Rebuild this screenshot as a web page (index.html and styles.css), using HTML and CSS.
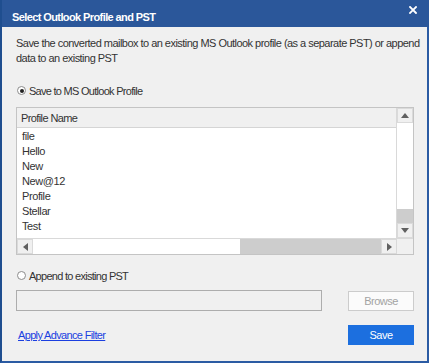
FILE: index.html
```html
<!DOCTYPE html>
<html>
<head>
<meta charset="utf-8">
<link rel="stylesheet" href="styles.css">
</head>
<body>
<div class="window">
  <div class="titlebar">
    <span class="title">Select Outlook Profile and PST</span>
    <span class="close">
      <svg width="8" height="8" viewBox="0 0 8 8"><path d="M1 1L7 7M7 1L1 7" stroke="#fff" stroke-width="1.8" stroke-linecap="square"/></svg>
    </span>
  </div>
  <div class="content">
    <p class="desc">Save the converted mailbox to an existing MS Outlook profile (as a separate PST) or append<br>data to an existing PST</p>
    <label class="radio-row first"><span class="radio checked"></span><span class="label">Save to MS Outlook Profile</span></label>
    <div class="listbox">
      <div class="list-main">
        <div class="list-header">Profile Name</div>
        <div class="rows">
          <div class="row">file</div>
          <div class="row">Hello</div>
          <div class="row">New</div>
          <div class="row">New@12</div>
          <div class="row">Profile</div>
          <div class="row">Stellar</div>
          <div class="row">Test</div>
        </div>
      </div>
      <div class="vscroll">
        <div class="sbtn"><svg width="8" height="5" viewBox="0 0 8 5"><path d="M0 5L4 0L8 5Z" fill="#606060"/></svg></div>
        <div class="vtrack"></div>
        <div class="vthumb"></div>
        <div class="sbtn"><svg width="8" height="5" viewBox="0 0 8 5"><path d="M0 0L8 0L4 5Z" fill="#606060"/></svg></div>
      </div>
      <div class="hscroll">
        <div class="sbtn h"><svg width="5" height="8" viewBox="0 0 5 8"><path d="M5 0L5 8L0 4Z" fill="#606060"/></svg></div>
        <div class="htrack"></div>
        <div class="hthumb"></div>
        <div class="sbtn h"><svg width="5" height="8" viewBox="0 0 5 8"><path d="M0 0L5 4L0 8Z" fill="#606060"/></svg></div>
      </div>
      <div class="corner"></div>
    </div>
    <label class="radio-row second"><span class="radio"></span><span class="label">Append to existing PST</span></label>
    <div class="pst-row">
      <div class="field"></div>
      <button class="btn browse">Browse</button>
    </div>
    <div class="bottom-row">
      <a class="link" href="#">Apply Advance Filter</a>
      <button class="btn save">Save</button>
    </div>
  </div>
</div>
</body>
</html>
```
FILE: styles.css
```css
html, body {
  margin: 0;
  padding: 0;
  background: #ffffff;
}
body {
  font-family: "Liberation Sans", Arial, sans-serif;
  font-size: 11px;
  color: #222;
}
.window {
  width: 425px;
  height: 361px;
  border-left: 2px solid #1f4e8f;
  border-right: 2px solid #2b5ba3;
  border-bottom: 2px solid #2b5ba3;
  display: flex;
  flex-direction: column;
  background: #f0f0f0;
}
.titlebar {
  height: 27px;
  background: #2b579a;
  display: flex;
  align-items: center;
  justify-content: space-between;
  padding: 0 12px 0 10px;
  margin-right: -2px;
}
.title {
  color: #fff;
  font-weight: bold;
  font-size: 11px;
  letter-spacing: -0.6px;
  margin-top: 6px;
}
.close {
  display: flex;
  margin-top: -7px;
}
.content {
  flex: 1;
  padding: 9px 12px 0 14px;
  display: flex;
  flex-direction: column;
}
.desc {
  margin: 0;
  line-height: 15px;
  letter-spacing: -0.53px;
  white-space: nowrap;
  color: #333;
}
.radio-row {
  display: flex;
  align-items: center;
  height: 15px;
  gap: 3px;
  padding-left: 1px;
}
.radio-row.first { margin-top: 17px; }
.radio-row.second { margin-top: 13px; }
.label {
  letter-spacing: -0.72px;
  color: #333;
}
.radio {
  width: 9px;
  height: 9px;
  border: 1px solid #8c8c8c;
  border-radius: 50%;
  background: #fff;
  box-sizing: border-box;
  display: flex;
  align-items: center;
  justify-content: center;
}
.radio.checked::after {
  content: "";
  width: 4px;
  height: 4px;
  border-radius: 50%;
  background: #222;
}
.listbox {
  margin-top: 9px;
  width: 398px;
  height: 148px;
  box-sizing: border-box;
  border: 1px solid #c4c4c4;
  background: #fff;
  display: grid;
  grid-template-columns: 1fr 16px;
  grid-template-rows: 1fr 16px;
}
.list-main {
  overflow: hidden;
}
.list-header {
  height: 20px;
  box-sizing: border-box;
  background: #f0f0f0;
  border-bottom: 1px solid #d5d5d5;
  padding-left: 4px;
  line-height: 20px;
  letter-spacing: -0.6px;
  color: #333;
}
.rows {
  padding-top: 1px;
}
.row {
  height: 15px;
  line-height: 15px;
  padding-left: 5px;
  letter-spacing: -0.4px;
  color: #333;
}
.vscroll {
  display: flex;
  flex-direction: column;
  border-left: 1px solid #d9d9d9;
  margin-left: -1px;
}
.sbtn {
  height: 15px;
  flex: none;
  background: #f0f0f0;
  border: 1px solid #dadada;
  box-sizing: border-box;
  display: flex;
  align-items: center;
  justify-content: center;
}
.sbtn.h {
  height: auto;
  width: 16px;
}
.vtrack { flex: 1; background: #fff; }
.vthumb { height: 14px; background: #cdcdcd; }
.hscroll {
  display: flex;
  border-top: 1px solid #d9d9d9;
}
.htrack { width: 207px; background: #fff; }
.hthumb { flex: 1; background: #cdcdcd; }
.corner {
  background: #f0f0f0;
  border-top: 1px solid #d9d9d9;
  border-left: 1px solid #d9d9d9;
  margin-left: -1px;
}
.pst-row {
  margin-top: 7px;
  display: flex;
  justify-content: space-between;
  width: 398px;
  align-items: flex-start;
}
.field {
  width: 306px;
  height: 21px;
  box-sizing: border-box;
  border: 1px solid #adadad;
  background: #f0f0f0;
}
.btn {
  width: 66px;
  height: 20px;
  box-sizing: border-box;
  font-family: "Liberation Sans", Arial, sans-serif;
  font-size: 11px;
  letter-spacing: -0.5px;
  padding: 0;
  margin: 0;
}
.browse {
  margin-top: 1px;
  background: #fbfbfb;
  border: 1px solid #cccccc;
  color: #a3a3a3;
}
.bottom-row {
  margin-top: 14px;
  width: 398px;
  display: flex;
  justify-content: space-between;
  align-items: center;
}
.link {
  color: #1b3fe0;
  text-decoration: underline;
  letter-spacing: -0.65px;
  margin-left: 2px;
}
.save {
  background: #1c6fdf;
  border: 1px solid #1c6fdf;
  color: #fff;
}
```
